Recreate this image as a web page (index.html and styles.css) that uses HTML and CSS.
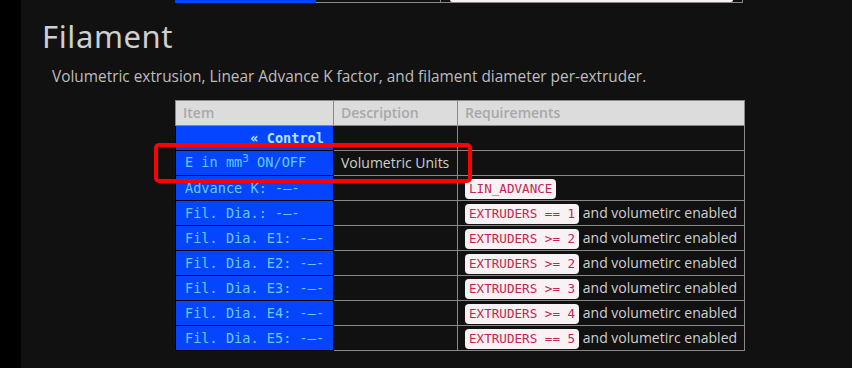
FILE: index.html
```html
<!DOCTYPE html>
<html>
<head>
<meta charset="utf-8">
<link rel="stylesheet" href="styles.css">
</head>
<body>
<div class="page">
  <div class="prev">
    <div class="prev-item"></div>
    <div class="prev-desc"></div>
    <div class="prev-req"><span class="prev-code"></span></div>
  </div>
  <h2 class="title">Filament</h2>
  <p class="lead">Volumetric extrusion, Linear Advance K factor, and filament diameter per-extruder.</p>
  <table class="menu">
    <thead>
      <tr><th class="c-item">Item</th><th class="c-desc">Description</th><th class="c-req">Requirements</th></tr>
    </thead>
    <tbody>
      <tr><td class="item back">« Control</td><td></td><td></td></tr>
      <tr><td class="item">E in mm<span class="sup">3</span> ON/OFF</td><td class="desc">Volumetric Units</td><td></td></tr>
      <tr><td class="item">Advance K: -—-</td><td></td><td class="req"><code>LIN_ADVANCE</code></td></tr>
      <tr><td class="item">Fil. Dia.: -—-</td><td></td><td class="req"><code>EXTRUDERS == 1</code> and volumetirc enabled</td></tr>
      <tr><td class="item">Fil. Dia. E1: -—-</td><td></td><td class="req"><code>EXTRUDERS &gt;= 2</code> and volumetirc enabled</td></tr>
      <tr><td class="item">Fil. Dia. E2: -—-</td><td></td><td class="req"><code>EXTRUDERS &gt;= 2</code> and volumetirc enabled</td></tr>
      <tr><td class="item">Fil. Dia. E3: -—-</td><td></td><td class="req"><code>EXTRUDERS &gt;= 3</code> and volumetirc enabled</td></tr>
      <tr><td class="item">Fil. Dia. E4: -—-</td><td></td><td class="req"><code>EXTRUDERS &gt;= 4</code> and volumetirc enabled</td></tr>
      <tr><td class="item">Fil. Dia. E5: -—-</td><td></td><td class="req"><code>EXTRUDERS == 5</code> and volumetirc enabled</td></tr>
    </tbody>
  </table>
  <div class="highlight"></div>
</div>
</body>
</html>
```
FILE: styles.css
```css
html, body {
  margin: 0;
  padding: 0;
  background: #000;
}
body {
  font-family: "Open Sans", "Noto Sans", sans-serif;
  color: #c8c8c8;
}
.page {
  position: relative;
  margin-left: 21px;
  background: #111;
  height: 368px;
  overflow: hidden;
}
.prev {
  display: flex;
  height: 3px;
  padding-left: 154px;
}
.prev-item {
  width: 141px;
  background: #0044ff;
}
.prev-desc {
  width: 125px;
  border-bottom: 1px solid #888;
  border-right: 1px solid #888;
  box-sizing: border-box;
}
.prev-req {
  width: 302px;
  border-bottom: 1px solid #888;
  border-right: 1px solid #888;
  box-sizing: border-box;
  padding-left: 9px;
}
.prev-code {
  display: block;
  width: 283px;
  height: 2px;
  background: #f9f2f4;
  border-radius: 0 0 3px 3px;
}
.title {
  margin: 15px 0 0 21px;
  font-family: "Noto Sans", sans-serif;
  font-weight: 400;
  font-size: 31px;
  line-height: 36px;
  letter-spacing: 0.6px;
  color: #cfcfcf;
}
.lead {
  margin: 13px 0 13px 31px;
  font-size: 15.4px;
  line-height: 20px;
  color: #bdbdbd;
}
.menu {
  margin-left: 154px;
  border-collapse: collapse;
  font-size: 14px;
}
.menu th, .menu td {
  border: 1px solid #888;
  height: 25px;
  padding: 0 7px;
  line-height: 22px;
  text-align: left;
  white-space: nowrap;
  box-sizing: border-box;
}
.menu th {
  background: #dcdcdc;
  color: #a8a8a8;
  font-weight: 600;
}
.c-item { width: 158px; }
.c-desc { width: 124px; }
.c-req { width: 287px; }
.menu td.item {
  background: #0645ff;
  border-color: #000;
  color: #62ccff;
  font-family: "DejaVu Sans Mono", monospace;
  font-size: 13.6px;
  padding-left: 9px;
}
.sup {
  font-size: 11px;
  position: relative;
  top: -5px;
}
.menu td.back {
  text-align: right;
  font-weight: bold;
  color: #b8e4ff;
  padding-right: 9px;
}
.desc {
  color: #cfcfcf;
}
.req code {
  display: inline-block;
  font-family: "DejaVu Sans Mono", monospace;
  font-size: 12.6px;
  line-height: 20px;
  padding: 0 4px;
  background: #f9f2f4;
  color: #c7254e;
  border-radius: 4px;
  vertical-align: middle;
}
.req {
  color: #cfcfcf;
}
.highlight {
  position: absolute;
  left: 133px;
  top: 143px;
  width: 318px;
  height: 40px;
  box-sizing: border-box;
  border: 4px solid #ff0000;
  border-radius: 5px;
}
```
